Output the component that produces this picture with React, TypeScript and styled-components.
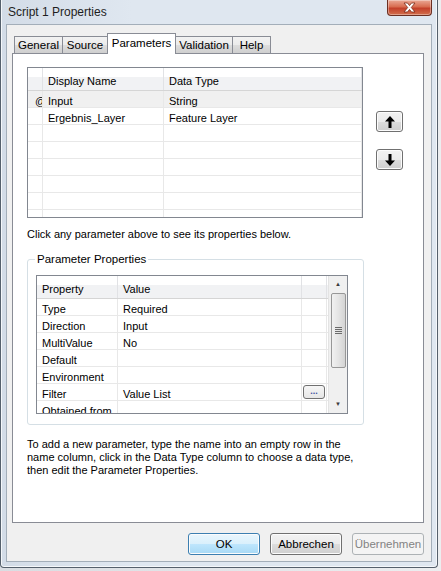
import styled, { createGlobalStyle } from 'styled-components';

const GlobalStyle = createGlobalStyle`
	html, body {
		margin: 0;
		padding: 0;
	}
	body {
		font-family: 'Liberation Sans', Arial, sans-serif;
		font-size: 11px;
		color: #000;
		background: #d9dde2;
	}
`;

interface IParam {
	name: string;
	type: string;
}

interface IProp {
	label: string;
	value: string;
	picker?: boolean;
}

const params: IParam[] = [
	{ name: 'Input', type: 'String' },
	{ name: 'Ergebnis_Layer', type: 'Feature Layer' },
	{ name: '', type: '' },
	{ name: '', type: '' },
	{ name: '', type: '' },
	{ name: '', type: '' },
	{ name: '', type: '' },
	{ name: '', type: '' },
];

const props: IProp[] = [
	{ label: 'Type', value: 'Required' },
	{ label: 'Direction', value: 'Input' },
	{ label: 'MultiValue', value: 'No' },
	{ label: 'Default', value: '' },
	{ label: 'Environment', value: '' },
	{ label: 'Filter', value: 'Value List', picker: true },
	{ label: 'Obtained from', value: '' },
];

const tabs = [
	{ label: 'General', width: 49 },
	{ label: 'Source', width: 46 },
	{ label: 'Parameters', width: 69 },
	{ label: 'Validation', width: 58 },
	{ label: 'Help', width: 39 },
];

function ArrowIcon({ down }: { down?: boolean }) {
	return (
		<svg width="10" height="12" viewBox="0 0 10 12" style={{ transform: down ? 'rotate(180deg)' : undefined }}>
			<path d="M5 0 L10 5.5 L6.5 5.5 L6.5 12 L3.5 12 L3.5 5.5 L0 5.5 Z" fill="#000" />
		</svg>
	);
}

function CloseGlyph() {
	return (
		<svg width="13" height="11" viewBox="0 0 13 11">
			<path
				d="M1 1 L4.5 1 L6.5 3.6 L8.5 1 L12 1 L8.3 5.5 L12 10 L8.5 10 L6.5 7.4 L4.5 10 L1 10 L4.7 5.5 Z"
				fill="#fff"
				stroke="#7a2a18"
				strokeWidth="0.8"
				strokeLinejoin="round"
			/>
		</svg>
	);
}

export default function App() {
	return (
		<Screen>
			<GlobalStyle />
			<Window>
				<TitleBar>
					<Title>Script 1 Properties</Title>
					<CloseButton>
						<CloseGlyph />
					</CloseButton>
				</TitleBar>
				<Client>
					<TabRow>
						{tabs.map((t) => (
							<Tab key={t.label} $w={t.width} $active={t.label === 'Parameters'}>
								{t.label}
							</Tab>
						))}
					</TabRow>
					<Panel>
						<ParamArea>
							<Grid $w={336} $h={151}>
								<HeadRow $cols="15px 121px 1fr">
									<HeadCell />
									<HeadCell>Display Name</HeadCell>
									<HeadCell>Data Type</HeadCell>
								</HeadRow>
								{params.map((p, i) => (
									<Row key={i} $cols="15px 121px 1fr" $selected={i === 0}>
										<Selector>{i === 0 ? '@' : ''}</Selector>
										<Cell>{p.name}</Cell>
										<Cell>{p.type}</Cell>
									</Row>
								))}
							</Grid>
							<MoveButtons>
								<MoveButton>
									<ArrowIcon />
								</MoveButton>
								<MoveButton>
									<ArrowIcon down />
								</MoveButton>
							</MoveButtons>
						</ParamArea>
						<Hint>Click any parameter above to see its properties below.</Hint>
						<Group>
							<legend>Parameter Properties</legend>
							<PropFrame>
								<PropGrid>
									<HeadRow $cols="81px 184px 25px">
										<HeadCell>Property</HeadCell>
										<HeadCell>Value</HeadCell>
										<HeadCell />
									</HeadRow>
									{props.map((p) => (
										<Row key={p.label} $cols="81px 184px 25px">
											<Cell>{p.label}</Cell>
											<Cell>{p.value}</Cell>
											<Cell>{p.picker && <DotsButton>...</DotsButton>}</Cell>
										</Row>
									))}
								</PropGrid>
								<ScrollBar>
									<ScrollArrow>▲</ScrollArrow>
									<Thumb>
										<Grip />
									</Thumb>
									<ScrollSpace />
									<ScrollArrow>▼</ScrollArrow>
								</ScrollBar>
							</PropFrame>
						</Group>
						<HelpText>
							To add a new parameter, type the name into an empty row in the
							<br />
							name column, click in the Data Type column to choose a data type,
							<br />
							then edit the Parameter Properties.
						</HelpText>
					</Panel>
					<ButtonBar>
						<DialogButton $variant="default">OK</DialogButton>
						<DialogButton>Abbrechen</DialogButton>
						<DialogButton $variant="disabled">Übernehmen</DialogButton>
					</ButtonBar>
				</Client>
			</Window>
		</Screen>
	);
}

const Screen = styled.div`
	width: 441px;
	height: 571px;
	overflow: hidden;
	background: linear-gradient(90deg, #d9dde2, #eceef0);
`;
const Window = styled.div`
	width: 438px;
	height: 568px;
	box-sizing: border-box;
	display: flex;
	flex-direction: column;
	padding: 0 5px 5px 5px;
	border: 1px solid #55606c;
	border-top: none;
	border-radius: 0 0 4px 4px;
	background: linear-gradient(90deg, #d3dce7 0%, #dfe7f0 30%, #dfe7f0 100%);
	box-shadow: inset 1px 0 0 #f4f7fa, inset -1px 0 0 #f4f7fa, inset 0 -1px 0 #f4f7fa;
`;
const TitleBar = styled.div`
	height: 24px;
	flex: 0 0 auto;
	display: flex;
	justify-content: space-between;
	align-items: flex-start;
`;
const Title = styled.span`
	padding: 5px 0 0 2px;
	font-size: 12px;
	color: #1e1e1e;
`;
const CloseButton = styled.div`
	width: 43px;
	height: 15px;
	display: flex;
	align-items: center;
	justify-content: center;
	border: 1px solid #6b2f22;
	border-top: none;
	border-radius: 0 0 4px 4px;
	background: linear-gradient(#eaa996 0%, #d86c50 45%, #c3402a 55%, #d2704e 100%);
	box-shadow: inset 0 0 0 1px rgba(255, 255, 255, 0.35);
`;
const Client = styled.div`
	flex: 1;
	display: flex;
	flex-direction: column;
	background: #f0f0f0;
	border: 1px solid #a3aeb9;
	padding: 8px 7px 6px 5px;
`;
const TabRow = styled.div`
	display: flex;
	align-items: flex-end;
	height: 21px;
	padding-left: 2px;
	position: relative;
	z-index: 1;
`;
const Tab = styled.div<{ $w: number; $active?: boolean }>`
	box-sizing: border-box;
	width: ${(p) => p.$w}px;
	height: ${(p) => (p.$active ? 21 : 18)}px;
	margin-left: -1px;
	padding-top: ${(p) => (p.$active ? 3 : 2)}px;
	text-align: center;
	font-size: 11.5px;
	border: 1px solid #898c95;
	border-bottom: ${(p) => (p.$active ? 'none' : '1px solid #898c95')};
	background: ${(p) => (p.$active ? '#fff' : 'linear-gradient(#f2f2f2, #ebebeb 50%, #dddddd 51%, #cfcfcf)')};
	&:first-child {
		margin-left: 0;
	}
`;
const Panel = styled.div`
	flex: 1;
	margin-top: -1px;
	background: #fff;
	border: 1px solid #898c95;
	padding: 13px 14px 0 14px;
	display: flex;
	flex-direction: column;
`;
const ParamArea = styled.div`
	display: flex;
	gap: 13px;
`;
const Grid = styled.div<{ $w: number; $h: number }>`
	width: ${(p) => p.$w}px;
	height: ${(p) => p.$h}px;
	box-sizing: border-box;
	border: 1px solid #828790;
	overflow: hidden;
	background: #fff;
`;
const HeadRow = styled.div<{ $cols: string }>`
	display: grid;
	grid-template-columns: ${(p) => p.$cols};
	height: 23px;
	box-sizing: border-box;
	border-bottom: 1px solid #d5d5d5;
	background: linear-gradient(#ffffff 0%, #ffffff 40%, #f1f2f4 41%, #f1f2f4 100%);
`;
const HeadCell = styled.div`
	display: flex;
	align-items: center;
	padding: 3px 0 0 5px;
	border-right: 1px solid #e1e2e5;
	white-space: nowrap;
`;
const Row = styled.div<{ $cols: string; $selected?: boolean }>`
	display: grid;
	grid-template-columns: ${(p) => p.$cols};
	height: 17px;
	box-sizing: border-box;
	border-bottom: 1px solid #e8e8e8;
	background: ${(p) => (p.$selected ? '#f0f0f0' : '#fff')};
`;
const Cell = styled.div`
	display: flex;
	align-items: center;
	padding: 3px 0 0 5px;
	border-right: 1px solid #e8e8e8;
	white-space: nowrap;
	overflow: hidden;
	position: relative;
`;
const Selector = styled.div`
	overflow: hidden;
	border-right: 1px solid #e8e8e8;
	display: flex;
	align-items: center;
	padding: 3px 0 0 7px;
	font-size: 11px;
`;
const MoveButtons = styled.div`
	display: flex;
	flex-direction: column;
	gap: 17px;
	padding-top: 44px;
`;
const MoveButton = styled.div`
	width: 27px;
	height: 21px;
	box-sizing: border-box;
	display: flex;
	align-items: center;
	justify-content: center;
	border: 1px solid #707070;
	border-radius: 3px;
	background: linear-gradient(#f2f2f2, #ebebeb 50%, #dddddd 51%, #cfcfcf);
	box-shadow: inset 0 0 0 1px #fcfcfc;
`;
const Hint = styled.div`
	margin-top: 10px;
	line-height: 13px;
`;
const Group = styled.fieldset`
	margin: 12px 0 0 0;
	padding: 9px 8px 10px 8px;
	width: 337px;
	box-sizing: border-box;
	border: 1px solid #d5dfe5;
	border-radius: 3px;
	legend {
		padding: 0 2px;
		margin-left: -1px;
		font-size: 11.5px;
		line-height: 13px;
	}
`;
const PropFrame = styled.div`
	display: flex;
	width: 312px;
	height: 139px;
	box-sizing: border-box;
	border: 1px solid #828790;
	overflow: hidden;
`;
const PropGrid = styled.div`
	width: 291px;
	overflow: hidden;
`;
const DotsButton = styled.div`
	position: absolute;
	left: 1px;
	top: 1px;
	width: 22px;
	height: 14px;
	box-sizing: border-box;
	border: 1px solid #707070;
	border-radius: 3px;
	background: linear-gradient(#f6f6f6, #e6e6e6);
	color: #4050a0;
	font-size: 9px;
	font-weight: bold;
	text-align: center;
	line-height: 10px;
`;
const ScrollBar = styled.div`
	flex: 1;
	display: flex;
	flex-direction: column;
	align-items: center;
	background: #f0f0f0;
	border-left: 1px solid #e3e3e3;
`;
const ScrollArrow = styled.div`
	height: 17px;
	font-size: 6px;
	line-height: 17px;
	color: #3c3c3c;
`;
const Thumb = styled.div`
	width: 15px;
	height: 75px;
	box-sizing: border-box;
	border: 1px solid #979797;
	border-radius: 2px;
	background: linear-gradient(90deg, #f1f1f1, #e4e4e4 50%, #d4d4d4);
	display: flex;
	align-items: center;
	justify-content: center;
`;
const Grip = styled.div`
	width: 7px;
	height: 7px;
	background: repeating-linear-gradient(#6b6b6b 0 1px, transparent 1px 2px);
`;
const ScrollSpace = styled.div`
	flex: 1;
`;
const HelpText = styled.div`
	margin-top: 13px;
	line-height: 13px;
`;
const ButtonBar = styled.div`
	display: flex;
	justify-content: flex-end;
	gap: 10px;
	padding-top: 10px;
`;
const DialogButton = styled.div<{ $variant?: 'default' | 'disabled' }>`
	width: 72px;
	height: 22px;
	box-sizing: border-box;
	display: flex;
	align-items: center;
	justify-content: center;
	font-size: 11.5px;
	border-radius: 3px;
	border: 1px solid
		${(p) => (p.$variant === 'default' ? '#3c7fb1' : p.$variant === 'disabled' ? '#adb2b5' : '#707070')};
	color: ${(p) => (p.$variant === 'disabled' ? '#838383' : '#000')};
	background: ${(p) =>
		p.$variant === 'disabled'
			? '#f4f4f4'
			: p.$variant === 'default'
			? 'linear-gradient(#eaf6fd, #d9f0fc 50%, #bee6fd 51%, #a7d9f5)'
			: 'linear-gradient(#f2f2f2, #ebebeb 50%, #dddddd 51%, #cfcfcf)'};
	box-shadow: inset 0 0 0 1px ${(p) => (p.$variant === 'disabled' ? 'transparent' : '#fcfcfc')};
`;
